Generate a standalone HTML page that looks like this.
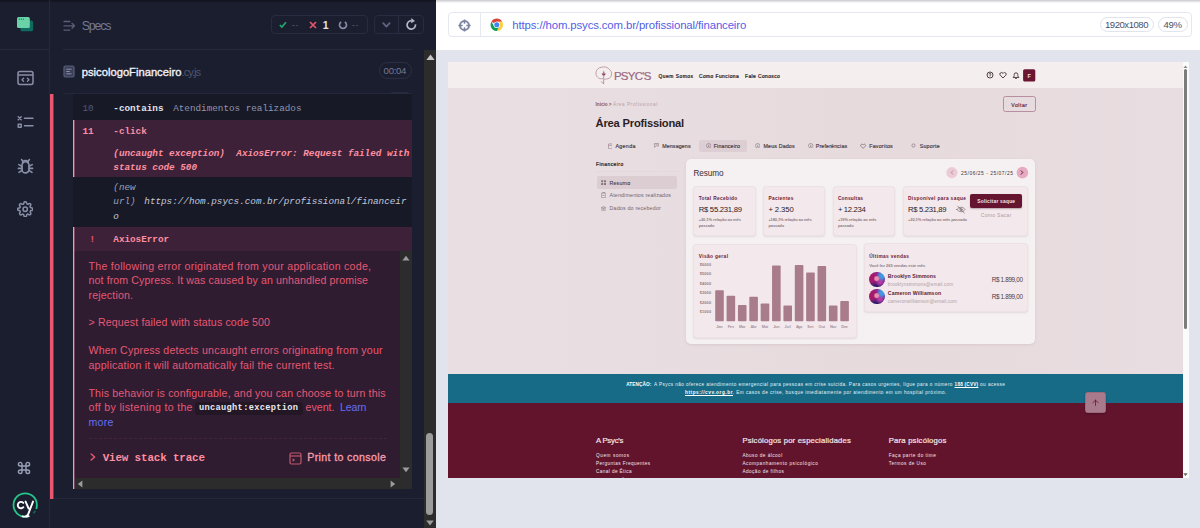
<!DOCTYPE html>
<html lang="en"><head><meta charset="utf-8"><title>Cypress - psicologoFinanceiro.cy.js</title>
<style>
html,body{margin:0;padding:0}
body{width:1200px;height:528px;position:relative;overflow:hidden;background:#e1e3ed;font-family:"Liberation Sans",sans-serif}
#app div,#app svg,#app span.t{position:absolute;display:block}
span.t{white-space:pre;line-height:1}
#app{position:absolute;left:0;top:0;width:1200px;height:528px;overflow:hidden}
</style></head><body><div id="app">
<div style="left:0px;top:0px;width:436px;height:528px;background:#1b1e2e;"></div>
<div style="left:0px;top:0px;width:436px;height:3px;background:linear-gradient(#10121c,rgba(16,18,28,0));"></div>
<div style="left:49px;top:0px;width:1px;height:528px;background:#252839;"></div>
<div style="left:0px;top:49px;width:49px;height:1px;background:#272a3d;"></div>
<div style="left:63px;top:49px;width:349px;height:1px;background:#272a3d;"></div>
<div style="left:63px;top:93px;width:349px;height:1px;background:#24273a;"></div>
<div style="left:50px;top:498px;width:386px;height:1px;background:#25283a;"></div>
<svg style="left:16px;top:16px" width="18" height="16" viewBox="0 0 18 16"><rect x="4.5" y="4.5" width="12.6" height="10.8" rx="1.6" fill="#0f6b62"/><rect x="1" y="1" width="12.8" height="11" rx="1.6" fill="#69d3a7"/><rect x="2.8" y="2.6" width="1.2" height="1.2" fill="#1b8a6b"/><rect x="4.8" y="2.6" width="1.2" height="1.2" fill="#1b8a6b"/><rect x="6.8" y="2.6" width="1.2" height="1.2" fill="#1b8a6b"/></svg>
<svg style="left:17px;top:70px" width="17" height="16" viewBox="0 0 17 16" fill="none" stroke="#8a8fa8" stroke-width="1.5" stroke-linecap="round" stroke-linejoin="round"><rect x="1" y="1.4" width="15" height="13" rx="1.8"/><path d="M1 5h15" stroke-linecap="butt"/><path d="M6.6 8.2 5 9.8l1.6 1.6M10.4 8.2 12 9.8l-1.6 1.6" stroke-width="1.3"/></svg>
<svg style="left:17px;top:114.700px" width="17" height="15" viewBox="0 0 17 15" fill="none" stroke="#8a8fa8" stroke-width="1.4" stroke-linecap="round"><path d="M1.2 1.8l3 3M4.2 1.8l-3 3"/><path d="M7.5 3.3H16M7.5 10.8H16"/><rect x="1.2" y="9.2" width="3" height="3" stroke-linejoin="round"/></svg>
<svg style="left:17px;top:158px" width="17" height="17" viewBox="0 0 17 17" fill="none" stroke="#8a8fa8" stroke-width="1.600" stroke-linecap="round" stroke-linejoin="round"><path d="M5 7.2a3.5 3.5 0 0 1 7 0v4.2a3.5 3.5 0 0 1-7 0z"/><path d="M5.6 5.4a2.9 2.9 0 0 1 5.8 0"/><path d="M5 8.2 1.8 6.6M5 10.4H1.4M5 12.4l-3 2M12 8.2l3.2-1.6M12 10.4h3.6M12 12.4l3 2M5.8 3.2 4.6 1.6M11.2 3.2l1.2-1.6"/></svg>
<svg style="left:16.700px;top:201px" width="16.400" height="16.400" viewBox="0 0 24 24" fill="none" stroke="#8a8fa8" stroke-width="2.200" stroke-linecap="round" stroke-linejoin="round"><circle cx="12" cy="12" r="3.2"/><path d="M19.4 15a1.65 1.65 0 0 0 .33 1.82l.06.06a2 2 0 1 1-2.83 2.83l-.06-.06a1.65 1.65 0 0 0-1.82-.33 1.65 1.65 0 0 0-1 1.51V21a2 2 0 1 1-4 0v-.09A1.65 1.65 0 0 0 9 19.4a1.65 1.65 0 0 0-1.82.33l-.06.06a2 2 0 1 1-2.83-2.83l.06-.06a1.65 1.65 0 0 0 .33-1.82 1.65 1.65 0 0 0-1.51-1H3a2 2 0 1 1 0-4h.09A1.65 1.65 0 0 0 4.6 9a1.65 1.65 0 0 0-.33-1.82l-.06-.06a2 2 0 1 1 2.83-2.83l.06.06a1.65 1.65 0 0 0 1.82.33H9a1.65 1.65 0 0 0 1-1.51V3a2 2 0 1 1 4 0v.09a1.65 1.65 0 0 0 1 1.51 1.65 1.65 0 0 0 1.820-.33l.06-.06a2 2 0 1 1 2.83 2.83l-.06.06a1.65 1.65 0 0 0-.33 1.82V9a1.65 1.65 0 0 0 1.51 1H21a2 2 0 1 1 0 4h-.09a1.65 1.65 0 0 0-1.51 1z"/></svg>
<svg style="left:17.300px;top:460.800px" width="14" height="14" viewBox="0 0 14 14" fill="none" stroke="#9aa0b8" stroke-width="1.4"><path d="M5 5h4v4H5zM5 5V3.2A1.8 1.8 0 1 0 3.200 5H5M9 5V3.200A1.8 1.8 0 1 1 10.8 5H9M5 9v1.8A1.8 1.8 0 1 1 3.200 9H5M9 9v1.800A1.8 1.8 0 1 0 10.800 9H9"/></svg>
<svg style="left:12px;top:492px" width="27" height="27" viewBox="0 0 27 27" fill="none" stroke-linecap="round" stroke-linejoin="round"><circle cx="13.200" cy="13" r="11.700" stroke="#27c58c" stroke-width="1.800"/><path d="M24.200 17A11.700 11.700 0 0 1 17.400 23.900" stroke="#1b1e2e" stroke-width="2.800" stroke-linecap="butt"/><path d="M23.300 18.900A11.700 11.700 0 0 1 21.500 21.300" stroke="#176b52" stroke-width="1.600" stroke-linecap="butt"/><path d="M16.600 24.200A11.700 11.700 0 0 1 10.500 24.400" stroke="#fff" stroke-width="1.800"/><path d="M11.300 10.900a3.200 3.200 0 1 0 .1 4.300" stroke="#fff" stroke-width="1.900"/><path d="M13.600 9.600l3 6.900M21 9.600l-4.600 12q-.6 1.800-2.200 2.600" stroke="#fff" stroke-width="1.900"/></svg>
<svg style="left:63px;top:20px" width="13" height="12" viewBox="0 0 13 12" fill="none" stroke="#5a5f7a" stroke-width="1.300" stroke-linecap="round" stroke-linejoin="round"><path d="M1 1.500h5.800M1 5.800h10.400M1 10.100h5.800M9 3.300l2.500 2.500L9 8.300"/></svg>
<span class="t" style="left:81.80px;top:19.60px;font:400 12.4px/1 'Liberation Sans',sans-serif;color:#747994;letter-spacing:-1.209px;">Specs</span>
<div style="left:271px;top:15px;width:97px;height:18.5px;background:transparent;border:1px solid #282c41;border-radius:4px;box-sizing:border-box"></div>
<svg style="left:279px;top:21.200px" width="8" height="7.500" viewBox="0 0 8 7.500" fill="none" stroke="#1fa971" stroke-width="1.700"><path d="M.8 4 2.900 6.100 7 1.200"/></svg>
<div style="left:292px;top:25px;width:2.5px;height:1px;background:#3d425c;"></div>
<div style="left:295.7px;top:25px;width:2.5px;height:1px;background:#3d425c;"></div>
<svg style="left:309px;top:20.5px" width="8" height="8" viewBox="0 0 8 8" fill="none" stroke="#e45770" stroke-width="1.700"><path d="M1 1l6 6M7 1 1 7"/></svg>
<span class="t" style="left:322.80px;top:19.71px;font:700 10.5px/1 'Liberation Sans',sans-serif;color:#e1e3ed;">1</span>
<svg style="left:337.600px;top:20.300px" width="10" height="10" viewBox="0 0 10 10" fill="none" stroke="#8589a4" stroke-width="1.700"><path d="M3.200 1.900A3.500 3.500 0 1 0 6.800 1.900"/></svg>
<div style="left:352px;top:25px;width:2.5px;height:1px;background:#3d425c;"></div>
<div style="left:355.7px;top:25px;width:2.5px;height:1px;background:#3d425c;"></div>
<div style="left:374px;top:15px;width:49.5px;height:18.5px;background:transparent;border:1px solid #282c41;border-radius:4px;box-sizing:border-box"></div>
<div style="left:398px;top:15.5px;width:1px;height:17.5px;background:#282c41;"></div>
<svg style="left:382.300px;top:21.500px" width="9" height="6.500" viewBox="0 0 9 6.500" fill="none" stroke="#5d6280" stroke-width="1.800" stroke-linecap="round" stroke-linejoin="round"><path d="M1.200 1.200l3.200 3.400L7.600 1.200"/></svg>
<svg style="left:404.500px;top:17.500px" width="13" height="13" viewBox="0 0 13 13" fill="none"><path d="M10.440 6.300A4.200 4.200 0 1 1 6.300 2.700" stroke="#b4b8cc" stroke-width="1.700"/><path d="M6.300 .1 10 2.900 6.100 5.300z" fill="#b4b8cc"/></svg>
<svg style="left:63px;top:65px" width="12" height="13" viewBox="0 0 12 13" fill="#3a3e56" stroke="#5a5f7a" stroke-width="1.200"><rect x="1" y="1" width="10" height="11" rx="1.400"/><path d="M3.200 4.200h5.400M3.200 6.500h3.600M3.200 8.800h5.400" stroke="#8a8fa8" stroke-width="1"/></svg>
<span class="t" style="left:81.80px;top:66.62px;font:400 11.2px/1 'Liberation Sans',sans-serif;color:#f0f1f8;letter-spacing:0.005px;-webkit-text-stroke:.35px">psicologoFinanceiro</span>
<span class="t" style="left:181.60px;top:66.62px;font:400 11.2px/1 'Liberation Sans',sans-serif;color:#50556f;letter-spacing:-1.011px;">.cy.js</span>
<div style="left:378.5px;top:62px;width:33.5px;height:16.5px;background:transparent;border:1px solid #2b2f45;border-radius:9px;box-sizing:border-box"></div>
<span class="t" style="left:383.60px;top:65.87px;font:400 9.6px/1 'Liberation Sans',sans-serif;color:#747994;letter-spacing:-0.304px;">00:04</span>
<div style="left:391px;top:92px;width:17px;height:3px;background:#262a3d;border-radius:0 0 4px 4px"></div>
<div style="left:50px;top:93.5px;width:3px;height:405px;background:#e8566f;"></div>
<div style="left:53px;top:93.5px;width:1px;height:405px;background:#7a3650;"></div>
<div style="left:73px;top:94px;width:338.5px;height:395px;background:#171926;"></div>
<span class="t" style="left:82.40px;top:104.47px;font:400 9.3px/1 'Liberation Mono',monospace;color:#535874;">10</span>
<span class="t" style="left:113.30px;top:104.47px;font:700 9.3px/1 'Liberation Mono',monospace;color:#e1e3ed;">-contains</span>
<span class="t" style="left:173.20px;top:104.47px;font:400 9.3px/1 'Liberation Mono',monospace;color:#9095ad;">Atendimentos realizados</span>
<div style="left:73px;top:120px;width:338.5px;height:57px;background:#3c2138;"></div>
<div style="left:73px;top:120px;width:1px;height:57px;background:#f59aaa;"></div>
<div style="left:74px;top:120px;width:1px;height:57px;background:#7e4a5e;"></div>
<span class="t" style="left:82.40px;top:126.67px;font:700 9.3px/1 'Liberation Mono',monospace;color:#ff8fa0;">11</span>
<span class="t" style="left:113.30px;top:126.67px;font:700 9.3px/1 'Liberation Mono',monospace;color:#ff8fa0;">-click</span>
<span class="t" style="left:113.30px;top:148.77px;font:italic 700 9.3px/1 'Liberation Mono',monospace;color:#ff8fa0;">(uncaught exception)</span>
<span class="t" style="left:236.30px;top:148.77px;font:italic 700 9.3px/1 'Liberation Mono',monospace;color:#ff8fa0;">AxiosError: Request failed with</span>
<span class="t" style="left:113.30px;top:162.87px;font:italic 700 9.3px/1 'Liberation Mono',monospace;color:#ff8fa0;">status code 500</span>
<span class="t" style="left:113.30px;top:182.97px;font:italic 400 9.3px/1 'Liberation Mono',monospace;color:#9ba1bd;">(new</span>
<span class="t" style="left:113.30px;top:197.37px;font:italic 400 9.3px/1 'Liberation Mono',monospace;color:#9ba1bd;">url)</span>
<span class="t" style="left:144.30px;top:197.37px;font:italic 400 9.3px/1 'Liberation Mono',monospace;color:#c4c8dc;">https://hom.psycs.com.br/profissional/financeir</span>
<span class="t" style="left:113.30px;top:211.57px;font:italic 400 9.3px/1 'Liberation Mono',monospace;color:#c4c8dc;">o</span>
<div style="left:73px;top:227px;width:338.5px;height:24px;background:#3c2138;"></div>
<div style="left:73px;top:227px;width:1px;height:262px;background:#f59aaa;"></div>
<div style="left:74px;top:227px;width:1px;height:24px;background:#7e4a5e;"></div>
<div style="left:74px;top:251px;width:1px;height:238px;background:#70445a;"></div>
<span class="t" style="left:89.50px;top:235.37px;font:700 9.3px/1 'Liberation Mono',monospace;color:#e45770;">!</span>
<span class="t" style="left:113.30px;top:235.37px;font:700 9.3px/1 'Liberation Mono',monospace;color:#ff8fa0;">AxiosError</span>
<div style="left:74.5px;top:251px;width:325.5px;height:226.5px;background:#2f1c31;"></div>
<span class="t" style="left:88.50px;top:261.23px;font:400 10.6px/1 'Liberation Sans',sans-serif;color:#e65873;letter-spacing:0.266px;">The following error originated from your application code,</span>
<span class="t" style="left:88.50px;top:275.43px;font:400 10.6px/1 'Liberation Sans',sans-serif;color:#e65873;letter-spacing:0.116px;">not from Cypress. It was caused by an unhandled promise</span>
<span class="t" style="left:88.50px;top:289.63px;font:400 10.6px/1 'Liberation Sans',sans-serif;color:#e65873;letter-spacing:0.167px;">rejection.</span>
<span class="t" style="left:88.50px;top:317.23px;font:400 10.6px/1 'Liberation Sans',sans-serif;color:#e65873;letter-spacing:0.142px;">&gt; Request failed with status code 500</span>
<span class="t" style="left:88.50px;top:345.43px;font:400 10.6px/1 'Liberation Sans',sans-serif;color:#e65873;letter-spacing:0.189px;">When Cypress detects uncaught errors originating from your</span>
<span class="t" style="left:88.50px;top:359.63px;font:400 10.6px/1 'Liberation Sans',sans-serif;color:#e65873;letter-spacing:0.212px;">application it will automatically fail the current test.</span>
<span class="t" style="left:88.50px;top:387.83px;font:400 10.6px/1 'Liberation Sans',sans-serif;color:#e65873;letter-spacing:0.148px;">This behavior is configurable, and you can choose to turn this</span>
<span class="t" style="left:88.50px;top:402.03px;font:400 10.6px/1 'Liberation Sans',sans-serif;color:#e65873;letter-spacing:0.319px;">off by listening to the</span>
<div style="left:195px;top:402px;width:107.5px;height:13px;background:#231726;border-radius:3px"></div>
<span class="t" style="left:199.00px;top:404.33px;font:700 8.7px/1 'Liberation Mono',monospace;color:#e8e9f2;letter-spacing:0.303px;">uncaught:exception</span>
<span class="t" style="left:305.50px;top:402.03px;font:400 10.6px/1 'Liberation Sans',sans-serif;color:#e65873;letter-spacing:0.028px;">event.</span>
<span class="t" style="left:340.00px;top:402.03px;font:400 10.6px/1 'Liberation Sans',sans-serif;color:#6470f3;letter-spacing:-0.152px;">Learn</span>
<span class="t" style="left:88.50px;top:417.23px;font:400 10.6px/1 'Liberation Sans',sans-serif;color:#6470f3;letter-spacing:0.286px;">more</span>
<div style="left:88.5px;top:437.5px;width:298px;height:0px;background:transparent;border-top:1px dashed #412539"></div>
<svg style="left:90px;top:453px" width="6" height="8" viewBox="0 0 6 8" fill="none" stroke="#e45770" stroke-width="1.500" stroke-linecap="round" stroke-linejoin="round"><path d="M1.200 1 4.600 4 1.200 7"/></svg>
<span class="t" style="left:102.70px;top:452.68px;font:700 10.85px/1 'Liberation Mono',monospace;color:#ff8fa0;letter-spacing:-0.122px;">View stack trace</span>
<svg style="left:289px;top:451.500px" width="13" height="13" viewBox="0 0 13 13" fill="none" stroke="#c4566e" stroke-width="1.200" stroke-linejoin="round"><rect x="1" y="1" width="11" height="11" rx="1.500"/><path d="M1 4h11"/><path d="M3.600 6.200v3.600l2.600-1.800z" fill="#c4566e" stroke="none"/></svg>
<span class="t" style="left:307.30px;top:452.23px;font:400 10.6px/1 'Liberation Sans',sans-serif;color:#fb9cab;letter-spacing:0.365px;-webkit-text-stroke:.3px">Print to console</span>
<div style="left:400px;top:251px;width:11.5px;height:226.5px;background:#2c2c2c;"></div>
<div style="left:74.5px;top:477.5px;width:337px;height:11.5px;background:#2c2c2c;"></div>
<svg style="left:402px;top:255px" width="8" height="6" viewBox="0 0 8 6"><path d="M4 .8 7.600 5.400H.4z" fill="#9c9c9c"/></svg>
<svg style="left:402px;top:467px" width="8" height="6" viewBox="0 0 8 6"><path d="M4 5.200 7.600 .6H.4z" fill="#9c9c9c"/></svg>
<svg style="left:77px;top:479.500px" width="6" height="8" viewBox="0 0 6 8"><path d="M.8 4 5.400 .4v7.200z" fill="#9c9c9c"/></svg>
<svg style="left:390px;top:479.500px" width="6" height="8" viewBox="0 0 6 8"><path d="M5.200 4 .6 .4v7.200z" fill="#9c9c9c"/></svg>
<div style="left:424px;top:50px;width:12px;height:478px;background:#2c2c2c;"></div>
<svg style="left:425.500px;top:53.500px" width="9" height="6.500" viewBox="0 0 8 6"><path d="M4 .4 7.900 5.700H.1z" fill="#c4c4c4"/></svg>
<svg style="left:426px;top:519.500px" width="8" height="6" viewBox="0 0 8 6"><path d="M4 5.400 7.800 .4H.2z" fill="#9c9c9c"/></svg>
<div style="left:426px;top:432.5px;width:7px;height:82px;background:#9c9c9c;border-radius:3.500px"></div>
<div style="left:436px;top:0px;width:764px;height:50px;background:#ffffff;"></div>
<div style="left:436px;top:0px;width:764px;height:3px;background:linear-gradient(#c9c9cf,rgba(255,255,255,0));"></div>
<div style="left:436px;top:50px;width:764px;height:478px;background:#e1e3ed;"></div>
<div style="left:448px;top:12px;width:744px;height:24.5px;background:#fff;border:1px solid #e6e8f1;border-radius:4px;box-sizing:border-box"></div>
<div style="left:480px;top:12.5px;width:1px;height:23.5px;background:#e6e8f1;"></div>
<svg style="left:458.300px;top:18.500px" width="13" height="13" viewBox="0 0 13 13" fill="none" stroke="#7d84a0"><circle cx="6.500" cy="6.500" r="4.500" stroke-width="1.900"/><path d="M6.500 .4v4.300M6.500 8.300v4.300M.4 6.500h4.300M8.300 6.500h4.300" stroke-width="1.500"/></svg>
<svg style="left:490px;top:17.500px" width="13.600" height="13.600" viewBox="0 0 48 48"><circle cx="24" cy="24" r="22" fill="#fff"/><path d="M24 2a22 22 0 0 1 19.050 11H24a11 11 0 0 0-9.530 5.500L5 13A22 22 0 0 1 24 2z" fill="#db4437"/><path d="M43.050 13A22 22 0 0 1 24 46l9.530-16.500A11 11 0 0 0 33.530 18.500z" fill="#ffcd40"/><path d="M24 46A22 22 0 0 1 4.950 13l9.520 16.500A11 11 0 0 0 24 35l9.530-5.500z" fill="#0f9d58"/><path d="M43.050 13H24a11 11 0 0 1 9.530 5.500z" fill="#ffcd40"/><circle cx="24" cy="24" r="11.200" fill="#fff"/><circle cx="24" cy="24" r="9" fill="#4285f4"/></svg>
<span class="t" style="left:512.30px;top:19.55px;font:400 11.4px/1 'Liberation Sans',sans-serif;color:#5360e5;letter-spacing:-0.127px;">https://hom.psycs.com.br/profissional/financeiro</span>
<div style="left:1099.5px;top:17.2px;width:54.5px;height:15.3px;background:#fff;border:1px solid #e1e3ed;border-radius:8px;box-sizing:border-box"></div>
<span class="t" style="left:1105.00px;top:20.47px;font:400 9.6px/1 'Liberation Sans',sans-serif;color:#4b506b;letter-spacing:-0.498px;">1920x1080</span>
<div style="left:1158px;top:17.2px;width:29.5px;height:15.3px;background:#fff;border:1px solid #e1e3ed;border-radius:8px;box-sizing:border-box"></div>
<span class="t" style="left:1163.50px;top:20.47px;font:400 9.6px/1 'Liberation Sans',sans-serif;color:#4b506b;letter-spacing:-0.352px;">49%</span>
<div id="aut" style="left:448.4px;top:62px;width:740.6px;height:416px;background:#e8dde0;overflow:hidden">
<div style="left:-0.4px;top:26px;width:735px;height:286px;background:linear-gradient(90deg,#e9dfe2,#e6dadd 60%,#e8dde0);"></div>
<div style="left:-0.4px;top:0px;width:735px;height:26.3px;background:#f4eeef;"></div>
<svg style="left:147.10px;top:4.00px" width="17.5" height="19" viewBox="0 0 17.5 19" ><g fill="none" stroke="#b08797" stroke-width=".75" stroke-linecap="round" stroke-linejoin="round"><path d="M9.600 13.200c3.400 .2 6.400-1.300 6.900-4.200 .5-2.700-.6-4.600-2.300-5.600C12.800 1 9.400 .4 6.800 1.200 3.900 1.400 1.400 3.400 1 6.200c-.4 2.600 .8 4.400 1.600 5 1 1.300 3.200 2 5.200 1.400"/><path d="M8.700 5.200V17.600M6.400 15.600l2.100 2.200" stroke="#a9798c"/></g><path d="M6.500 7.600h4.400l-1.300 1.900H7.800z" fill="#8e4563"/><circle cx="8.700" cy="7" r=".9" fill="#a9798c"/></svg>
<span class="t" style="left:165.50px;top:8.87px;font:400 11.5px/1 'Liberation Sans',sans-serif;color:#9a6a81;letter-spacing:-0.717px;-webkit-text-stroke:.22px #9a6a81">PSYC&#x27;S</span>
<span class="t" style="left:210.10px;top:13.05px;font:400 4.9px/1 'Liberation Sans',sans-serif;color:#2a1a20;letter-spacing:0.510px;-webkit-text-stroke:.22px">Quem Somos</span>
<span class="t" style="left:250.60px;top:13.05px;font:400 4.9px/1 'Liberation Sans',sans-serif;color:#2a1a20;letter-spacing:0.431px;-webkit-text-stroke:.22px">Como Funciona</span>
<span class="t" style="left:296.60px;top:13.05px;font:400 4.9px/1 'Liberation Sans',sans-serif;color:#2a1a20;letter-spacing:0.419px;-webkit-text-stroke:.22px">Fale Conosco</span>
<svg style="left:537.60px;top:8.80px" width="8" height="8" viewBox="0 0 8 8" ><g fill="none" stroke="#2a1a20" stroke-width=".8"><circle cx="4" cy="4" r="3"/><path d="M3.100 3.300a.9 .9 0 1 1 1.300 .8c-.3 .2-.4 .4-.4 .8M4 5.700v.3"/></g></svg>
<svg style="left:550.60px;top:8.80px" width="8" height="8" viewBox="0 0 8 8" ><path d="M4 7 1.300 4.300a1.600 1.600 0 1 1 2.300-2.300L4 2.400l.4-.4a1.600 1.600 0 1 1 2.300 2.300z" fill="none" stroke="#2a1a20" stroke-width=".8" stroke-linejoin="round"/></svg>
<svg style="left:563.30px;top:8.60px" width="8" height="8.5" viewBox="0 0 8 8.500" ><path d="M1.400 6.200c.7-.6 .8-1.300 .8-2.600a1.800 1.800 0 0 1 3.600 0c0 1.300 .1 2 .8 2.600zM3.300 7.300a.8 .8 0 0 0 1.400 0" fill="none" stroke="#2a1a20" stroke-width=".8" stroke-linejoin="round" stroke-linecap="round"/></svg>
<svg style="left:573.60px;top:6.00px" width="15" height="15" viewBox="0 0 15 15" ><rect x="1.100" y="1.200" width="12.200" height="12.400" rx="1.600" fill="#6a1532"/></svg>
<span class="t" style="left:579.20px;top:12.36px;font:700 5.6px/1 'Liberation Sans',sans-serif;color:#f0dfe4;">F</span>
<span class="t" style="left:147.20px;top:40.52px;font:700 4.7px/1 'Liberation Sans',sans-serif;color:#8b5468;letter-spacing:-0.040px;">Início &gt;</span>
<span class="t" style="left:164.60px;top:40.52px;font:400 4.7px/1 'Liberation Sans',sans-serif;color:#b9a0aa;letter-spacing:0.548px;">Área Profissional</span>
<div style="left:554.8px;top:34.3px;width:32.8px;height:15.4px;background:transparent;border:1px solid #b68fa1;border-radius:2.500px;box-sizing:border-box"></div>
<span class="t" style="left:562.90px;top:41.28px;font:400 5.1px/1 'Liberation Sans',sans-serif;color:#6f2a47;letter-spacing:0.534px;-webkit-text-stroke:.2px">Voltar</span>
<span class="t" style="left:147.20px;top:56.22px;font:700 11.2px/1 'Liberation Sans',sans-serif;color:#2b1d23;letter-spacing:-0.214px;">Área Profissional</span>
<div style="left:250.6px;top:78px;width:48px;height:11.5px;background:#ddced3;border-radius:2px"></div>
<svg style="left:159.30px;top:80.70px" width="4.8" height="6.2" viewBox="0 0 4.800 6.200" ><rect x=".4" y=".9" width="4" height="4.900" rx=".7" fill="none" stroke="#8a7780" stroke-width=".6"/><path d="M.4 2.400h4" stroke="#8a7780" stroke-width=".5"/></svg>
<span class="t" style="left:167.00px;top:81.71px;font:400 5.3px/1 'Liberation Sans',sans-serif;color:#45353d;letter-spacing:0.347px;-webkit-text-stroke:.15px">Agenda</span>
<svg style="left:206.10px;top:81.30px" width="5" height="4.6" viewBox="0 0 5 4.600" ><path d="M.4 .4h4.200v2.600H2.200L.4 4.300z" fill="none" stroke="#8a7780" stroke-width=".6" stroke-linejoin="round"/><path d="M1.300 1.300h2.400" stroke="#8a7780" stroke-width=".5"/></svg>
<span class="t" style="left:213.80px;top:81.71px;font:400 5.3px/1 'Liberation Sans',sans-serif;color:#45353d;letter-spacing:0.126px;-webkit-text-stroke:.15px">Mensagens</span>
<svg style="left:257.70px;top:80.90px" width="5.4" height="5.4" viewBox="0 0 5.400 5.400" ><circle cx="2.700" cy="2.700" r="2.250" fill="none" stroke="#84717a" stroke-width=".55"/><path d="M2.700 1.500v2.400M2 3.300h1.400" stroke="#84717a" stroke-width=".5"/></svg>
<span class="t" style="left:265.30px;top:81.71px;font:400 5.3px/1 'Liberation Sans',sans-serif;color:#45353d;letter-spacing:0.163px;-webkit-text-stroke:.15px">Financeiro</span>
<svg style="left:306.70px;top:80.90px" width="5.4" height="5.4" viewBox="0 0 5.400 5.400" ><circle cx="2.700" cy="2.700" r="2.250" fill="none" stroke="#84717a" stroke-width=".55"/><path d="M2.700 1.500v2.400M2 3.300h1.400" stroke="#84717a" stroke-width=".5"/></svg>
<span class="t" style="left:315.10px;top:81.71px;font:400 5.3px/1 'Liberation Sans',sans-serif;color:#45353d;letter-spacing:0.150px;-webkit-text-stroke:.15px">Meus Dados</span>
<svg style="left:359.90px;top:80.90px" width="5.4" height="5.4" viewBox="0 0 5.400 5.400" ><circle cx="2.700" cy="2.700" r="2.250" fill="none" stroke="#84717a" stroke-width=".55"/><path d="M2.700 1.500v2.400M2 3.300h1.400" stroke="#84717a" stroke-width=".5"/></svg>
<span class="t" style="left:367.30px;top:81.71px;font:400 5.3px/1 'Liberation Sans',sans-serif;color:#45353d;letter-spacing:0.159px;-webkit-text-stroke:.15px">Preferências</span>
<svg style="left:412.10px;top:80.80px" width="6.2" height="6.2" viewBox="0 0 8 8" ><path d="M4 7 1.300 4.300a1.600 1.600 0 1 1 2.300-2.300L4 2.400l.4-.4a1.600 1.600 0 1 1 2.300 2.300z" fill="none" stroke="#7a6670" stroke-width=".9"/></svg>
<span class="t" style="left:420.80px;top:81.71px;font:400 5.3px/1 'Liberation Sans',sans-serif;color:#45353d;letter-spacing:0.225px;-webkit-text-stroke:.15px">Favoritos</span>
<svg style="left:462.90px;top:81.00px" width="5" height="5.5" viewBox="0 0 5 5.500" ><circle cx="2.500" cy="2.500" r="1.600" fill="none" stroke="#7b6670" stroke-width=".6"/></svg>
<span class="t" style="left:471.30px;top:81.71px;font:400 5.3px/1 'Liberation Sans',sans-serif;color:#45353d;letter-spacing:0.223px;-webkit-text-stroke:.15px">Suporte</span>
<span class="t" style="left:147.60px;top:100.85px;font:400 4.9px/1 'Liberation Sans',sans-serif;color:#2c1e24;letter-spacing:0.484px;-webkit-text-stroke:.22px">Financeiro</span>
<div style="left:147.2px;top:109px;width:83px;height:0.6px;background:#e3d8dc;"></div>
<div style="left:148.3px;top:114.2px;width:80.8px;height:12.8px;background:#dccdd3;border-radius:2px"></div>
<svg style="left:152.60px;top:117.90px" width="5.2" height="5.2" viewBox="0 0 5.200 5.200" ><g fill="#85737c"><rect x=".2" y=".2" width="2" height="2" rx=".3"/><rect x="3" y=".2" width="2" height="2" rx=".3"/><rect x=".2" y="3" width="2" height="2" rx=".3"/><rect x="3" y="3" width="2" height="2" rx=".3"/></g></svg>
<span class="t" style="left:161.10px;top:119.41px;font:400 5.3px/1 'Liberation Sans',sans-serif;color:#45353d;letter-spacing:0.173px;-webkit-text-stroke:.08px">Resumo</span>
<svg style="left:152.60px;top:130.30px" width="5.2" height="6" viewBox="0 0 5.200 6" ><g fill="none" stroke="#8a7780" stroke-width=".55"><rect x=".4" y="1" width="4.400" height="4.600" rx=".5"/><path d="M1.700 1V.4h1.800V1M1.600 3.400h2" stroke-linecap="round"/></g></svg>
<span class="t" style="left:161.10px;top:131.21px;font:400 5.3px/1 'Liberation Sans',sans-serif;color:#75626b;letter-spacing:0.158px;">Atendimentos realizados</span>
<svg style="left:152.60px;top:143.60px" width="5.2" height="5.4" viewBox="0 0 5.200 5.400" ><g fill="none" stroke="#8a7780" stroke-width=".55" stroke-linecap="round"><path d="M.4 1.700 2.600 .4 4.800 1.700z" stroke-linejoin="round"/><path d="M1.100 2.400v1.700M2.600 2.400v1.700M4.100 2.400v1.700M.3 5h4.600"/></g></svg>
<span class="t" style="left:161.10px;top:144.21px;font:400 5.3px/1 'Liberation Sans',sans-serif;color:#75626b;letter-spacing:0.194px;">Dados do recebedor</span>
<div style="left:237.8px;top:97.4px;width:348.8px;height:184.8px;background:#f5f0f1;border-radius:5px;box-shadow:0 1px 3px rgba(120,80,95,.12)"></div>
<span class="t" style="left:245.10px;top:107.66px;font:400 8.2px/1 'Liberation Sans',sans-serif;color:#3a2d33;letter-spacing:-0.080px;">Resumo</span>
<svg style="left:496.60px;top:104.00px" width="13" height="13" viewBox="0 0 13 13" ><circle cx="6.900" cy="6.600" r="5.600" fill="#eccbd6"/></svg>
<svg style="left:566.60px;top:104.00px" width="14" height="13" viewBox="0 0 14 13" ><circle cx="7.400" cy="6.600" r="5.800" fill="#e6abc2"/></svg>
<svg style="left:501.50px;top:108.10px" width="4" height="5" viewBox="0 0 4 5" ><path d="M2.800 .8 1.200 2.500 2.800 4.200" fill="none" stroke="#a8788a" stroke-width=".8" stroke-linecap="round" stroke-linejoin="round"/></svg>
<svg style="left:572.10px;top:108.10px" width="4" height="5" viewBox="0 0 4 5" ><path d="M1.200 .8 2.800 2.500 1.200 4.200" fill="none" stroke="#4f1830" stroke-width="1" stroke-linecap="round" stroke-linejoin="round"/></svg>
<span class="t" style="left:512.60px;top:109.85px;font:400 4.9px/1 'Liberation Sans',sans-serif;color:#3f3037;letter-spacing:0.532px;">25/06/25 - 25/07/25</span>
<div style="left:245.1px;top:123.7px;width:62.3px;height:50.5px;background:#f3e9ec;border:1px solid #ece2e5;border-radius:3.500px;box-sizing:border-box;box-shadow:0 1px 2px rgba(110,70,85,.13)"></div>
<span class="t" style="left:250.30px;top:135.14px;font:700 4.8px/1 'Liberation Sans',sans-serif;color:#6a1a36;letter-spacing:0.351px;">Total Recebido</span>
<span class="t" style="left:250.30px;top:144.28px;font:400 7.7px/1 'Liberation Sans',sans-serif;color:#2c2025;letter-spacing:-0.261px;">R$ 55.231,89</span>
<span class="t" style="left:250.30px;top:155.81px;font:700 4px/1 'Liberation Sans',sans-serif;color:#8d7b84;letter-spacing:-0.070px;">+20,1% relação ao mês</span>
<span class="t" style="left:250.30px;top:162.01px;font:700 4px/1 'Liberation Sans',sans-serif;color:#8d7b84;letter-spacing:-0.089px;">passado</span>
<div style="left:314.8px;top:123.7px;width:62.1px;height:50.5px;background:#f3e9ec;border:1px solid #ece2e5;border-radius:3.500px;box-sizing:border-box;box-shadow:0 1px 2px rgba(110,70,85,.13)"></div>
<span class="t" style="left:320.00px;top:135.14px;font:700 4.8px/1 'Liberation Sans',sans-serif;color:#6a1a36;letter-spacing:0.337px;">Pacientes</span>
<span class="t" style="left:320.00px;top:144.28px;font:400 7.7px/1 'Liberation Sans',sans-serif;color:#2c2025;letter-spacing:-0.096px;">+ 2.350</span>
<span class="t" style="left:320.00px;top:155.81px;font:700 4px/1 'Liberation Sans',sans-serif;color:#8d7b84;letter-spacing:-0.125px;">+180,1% relação ao mês</span>
<span class="t" style="left:320.00px;top:162.01px;font:700 4px/1 'Liberation Sans',sans-serif;color:#8d7b84;letter-spacing:-0.089px;">passado</span>
<div style="left:384.3px;top:123.7px;width:62.1px;height:50.5px;background:#f3e9ec;border:1px solid #ece2e5;border-radius:3.500px;box-sizing:border-box;box-shadow:0 1px 2px rgba(110,70,85,.13)"></div>
<span class="t" style="left:389.50px;top:135.14px;font:700 4.8px/1 'Liberation Sans',sans-serif;color:#6a1a36;letter-spacing:0.237px;">Consultas</span>
<span class="t" style="left:389.50px;top:144.28px;font:400 7.7px/1 'Liberation Sans',sans-serif;color:#2c2025;letter-spacing:-0.334px;">+ 12.234</span>
<span class="t" style="left:389.50px;top:155.81px;font:700 4px/1 'Liberation Sans',sans-serif;color:#8d7b84;letter-spacing:-0.098px;">+19% relação ao mês</span>
<span class="t" style="left:389.50px;top:162.01px;font:700 4px/1 'Liberation Sans',sans-serif;color:#8d7b84;letter-spacing:-0.089px;">passado</span>
<div style="left:454.4px;top:123.7px;width:125.2px;height:50.5px;background:#f3e9ec;border:1px solid #ece2e5;border-radius:3.500px;box-sizing:border-box;box-shadow:0 1px 2px rgba(110,70,85,.13)"></div>
<span class="t" style="left:459.60px;top:135.14px;font:700 4.8px/1 'Liberation Sans',sans-serif;color:#6a1a36;letter-spacing:0.349px;">Disponível para saque</span>
<span class="t" style="left:459.60px;top:144.28px;font:400 7.7px/1 'Liberation Sans',sans-serif;color:#2c2025;letter-spacing:-0.329px;">R$ 5.231,89</span>
<span class="t" style="left:459.60px;top:155.81px;font:700 4px/1 'Liberation Sans',sans-serif;color:#8d7b84;letter-spacing:-0.070px;">+20,1% relação ao mês passado</span>
<svg style="left:507.70px;top:142.60px" width="10" height="9" viewBox="0 0 9 8" ><g fill="none" stroke="#66565e" stroke-width=".55" stroke-linecap="round"><path d="M.8 4c1.900-2.700 5.500-2.700 7.400 0-1.900 2.700-5.500 2.700-7.400 0z"/><circle cx="4.500" cy="4" r="1"/><path d="M1.500 .9l6 6.400"/></g></svg>
<div style="left:521.5px;top:132.3px;width:52.6px;height:13.8px;background:#651530;border-radius:2px;box-shadow:0 1px 1.500px rgba(60,10,30,.3)"></div>
<span class="t" style="left:528.90px;top:138.45px;font:700 4.9px/1 'Liberation Sans',sans-serif;color:#f6e6eb;letter-spacing:0.215px;">Solicitar saque</span>
<span class="t" style="left:532.30px;top:151.08px;font:400 5.1px/1 'Liberation Sans',sans-serif;color:#b09aa4;letter-spacing:0.265px;">Como Sacar</span>
<div style="left:245.1px;top:181.5px;width:163.7px;height:94px;background:#f3e9ec;border:1px solid #ece2e5;border-radius:3.500px;box-sizing:border-box;box-shadow:0 1px 2px rgba(110,70,85,.13)"></div>
<span class="t" style="left:250.30px;top:192.94px;font:700 4.8px/1 'Liberation Sans',sans-serif;color:#6a1a36;letter-spacing:0.378px;">Visão geral</span>
<span class="t" style="left:251.30px;top:200.90px;font:700 3.9px/1 'Liberation Sans',sans-serif;color:#8d7b84;letter-spacing:0.143px;">$6000</span>
<span class="t" style="left:251.30px;top:209.80px;font:700 3.9px/1 'Liberation Sans',sans-serif;color:#8d7b84;letter-spacing:0.143px;">$5000</span>
<span class="t" style="left:251.30px;top:219.60px;font:700 3.9px/1 'Liberation Sans',sans-serif;color:#8d7b84;letter-spacing:0.143px;">$4000</span>
<span class="t" style="left:251.30px;top:229.20px;font:700 3.9px/1 'Liberation Sans',sans-serif;color:#8d7b84;letter-spacing:0.143px;">$3000</span>
<span class="t" style="left:251.30px;top:239.10px;font:700 3.9px/1 'Liberation Sans',sans-serif;color:#8d7b84;letter-spacing:0.143px;">$2000</span>
<span class="t" style="left:251.30px;top:248.40px;font:700 3.9px/1 'Liberation Sans',sans-serif;color:#8d7b84;letter-spacing:0.143px;">$1000</span>
<span class="t" style="left:267.90px;top:262.90px;font:700 3.9px/1 'Liberation Sans',sans-serif;color:#a3929a;letter-spacing:-0.159px;">Jan</span>
<span class="t" style="left:279.27px;top:262.90px;font:700 3.9px/1 'Liberation Sans',sans-serif;color:#a3929a;letter-spacing:-0.159px;">Fev</span>
<span class="t" style="left:290.64px;top:262.90px;font:700 3.9px/1 'Liberation Sans',sans-serif;color:#a3929a;letter-spacing:-0.261px;">Mar</span>
<span class="t" style="left:302.01px;top:262.90px;font:700 3.9px/1 'Liberation Sans',sans-serif;color:#a3929a;letter-spacing:-0.152px;">Abr</span>
<span class="t" style="left:313.38px;top:262.90px;font:700 3.9px/1 'Liberation Sans',sans-serif;color:#a3929a;letter-spacing:-0.050px;">Mai</span>
<span class="t" style="left:324.75px;top:262.90px;font:700 3.9px/1 'Liberation Sans',sans-serif;color:#a3929a;letter-spacing:-0.261px;">Jun</span>
<span class="t" style="left:336.12px;top:262.90px;font:700 3.9px/1 'Liberation Sans',sans-serif;color:#a3929a;letter-spacing:0.388px;">Jul</span>
<span class="t" style="left:347.49px;top:262.90px;font:700 3.9px/1 'Liberation Sans',sans-serif;color:#a3929a;letter-spacing:-0.589px;">Ago</span>
<span class="t" style="left:358.86px;top:262.90px;font:700 3.9px/1 'Liberation Sans',sans-serif;color:#a3929a;letter-spacing:0.169px;">Set</span>
<span class="t" style="left:370.23px;top:262.90px;font:700 3.9px/1 'Liberation Sans',sans-serif;color:#a3929a;letter-spacing:-0.152px;">Out</span>
<span class="t" style="left:381.60px;top:262.90px;font:700 3.9px/1 'Liberation Sans',sans-serif;color:#a3929a;letter-spacing:-0.480px;">Nov</span>
<span class="t" style="left:392.97px;top:262.90px;font:700 3.9px/1 'Liberation Sans',sans-serif;color:#a3929a;letter-spacing:-0.261px;">Dez</span>
<svg style="left:261.60px;top:198.00px" width="145" height="65" viewBox="0 0 145 65" ><g fill="#a97c8c"><rect x="5.20" y="30.30" width="8.600" height="30.90" rx=".8"/><rect x="16.57" y="35.70" width="8.600" height="25.50" rx=".8"/><rect x="27.94" y="45.10" width="8.600" height="16.10" rx=".8"/><rect x="39.31" y="36.70" width="8.600" height="24.50" rx=".8"/><rect x="50.68" y="43.40" width="8.600" height="17.80" rx=".8"/><rect x="62.05" y="5.40" width="8.600" height="55.80" rx=".8"/><rect x="73.42" y="45.60" width="8.600" height="15.60" rx=".8"/><rect x="84.79" y="5.00" width="8.600" height="56.20" rx=".8"/><rect x="96.16" y="12.60" width="8.600" height="48.60" rx=".8"/><rect x="107.53" y="5.90" width="8.600" height="55.30" rx=".8"/><rect x="118.90" y="45.60" width="8.600" height="15.60" rx=".8"/><rect x="130.27" y="41.10" width="8.600" height="20.10" rx=".8"/></g></svg>
<div style="left:415.9px;top:180.8px;width:163.4px;height:69.4px;background:#f3e9ec;border:1px solid #ece2e5;border-radius:3.500px;box-sizing:border-box;box-shadow:0 1px 2px rgba(110,70,85,.13)"></div>
<span class="t" style="left:420.90px;top:192.94px;font:700 4.8px/1 'Liberation Sans',sans-serif;color:#6a1a36;letter-spacing:0.346px;">Últimas vendas</span>
<span class="t" style="left:420.90px;top:202.01px;font:700 4px/1 'Liberation Sans',sans-serif;color:#8d7b84;letter-spacing:-0.032px;">Você fez 265 vendas este mês</span>
<div style="left:420.8px;top:209.9px;width:15.5px;height:15.5px;background:radial-gradient(circle at 48% 44%,#ea8db3 0 15%,rgba(234,141,179,0) 27%),radial-gradient(circle at 80% 26%,#4596de 0 13%,rgba(69,150,222,0) 33%),radial-gradient(circle at 16% 38%,#a51a6a 0 24%,rgba(165,26,106,0) 50%),radial-gradient(circle at 70% 66%,#b43aa6 0 12%,rgba(180,58,166,0) 34%),linear-gradient(180deg,#8b2c9c 0%,#6a2a98 50%,#2a1760 100%);border-radius:50%"></div>
<span class="t" style="left:439.40px;top:211.70px;font:700 5.2px/1 'Liberation Sans',sans-serif;color:#5c1a33;letter-spacing:0.061px;">Brooklyn Simmons</span>
<span class="t" style="left:439.40px;top:221.11px;font:400 4.6px/1 'Liberation Sans',sans-serif;color:#b0a0a7;letter-spacing:0.161px;">brooklynsimmons@email.com</span>
<span class="t" style="left:543.30px;top:214.58px;font:400 6.4px/1 'Liberation Sans',sans-serif;color:#4c3d44;letter-spacing:-0.353px;">R$ 1.899,00</span>
<div style="left:420.8px;top:226.9px;width:15.5px;height:15.5px;background:radial-gradient(circle at 48% 44%,#ea8db3 0 15%,rgba(234,141,179,0) 27%),radial-gradient(circle at 80% 26%,#4596de 0 13%,rgba(69,150,222,0) 33%),radial-gradient(circle at 16% 38%,#a51a6a 0 24%,rgba(165,26,106,0) 50%),radial-gradient(circle at 70% 66%,#b43aa6 0 12%,rgba(180,58,166,0) 34%),linear-gradient(180deg,#8b2c9c 0%,#6a2a98 50%,#2a1760 100%);border-radius:50%"></div>
<span class="t" style="left:439.40px;top:228.70px;font:700 5.2px/1 'Liberation Sans',sans-serif;color:#5c1a33;letter-spacing:0.120px;">Cameron Williamson</span>
<span class="t" style="left:439.40px;top:238.11px;font:400 4.6px/1 'Liberation Sans',sans-serif;color:#b0a0a7;letter-spacing:0.167px;">cameronwilliamson@email.com</span>
<span class="t" style="left:543.30px;top:231.58px;font:400 6.4px/1 'Liberation Sans',sans-serif;color:#4c3d44;letter-spacing:-0.353px;">R$ 1.899,00</span>
<div style="left:-0.4px;top:311.7px;width:735px;height:29.2px;background:#176b87;"></div>
<span class="t" style="left:177.80px;top:321.22px;font:700 4.7px/1 'Liberation Sans',sans-serif;color:#ffffff;letter-spacing:0.116px;">ATENÇÃO:</span>
<span class="t" style="left:205.50px;top:321.22px;font:400 4.7px/1 'Liberation Sans',sans-serif;color:#e9f3f6;letter-spacing:0.418px;">A Psycs não oferece atendimento emergencial para pessoas em crise suicida. Para casos urgentes, ligue para o número</span>
<span class="t" style="left:506.20px;top:321.22px;font:700 4.7px/1 'Liberation Sans',sans-serif;color:#ffffff;letter-spacing:0.214px;text-decoration:underline">188 (CVV)</span>
<span class="t" style="left:531.70px;top:321.22px;font:400 4.7px/1 'Liberation Sans',sans-serif;color:#e9f3f6;letter-spacing:0.428px;">ou acesse</span>
<span class="t" style="left:236.60px;top:329.32px;font:700 4.7px/1 'Liberation Sans',sans-serif;color:#ffffff;letter-spacing:0.562px;text-decoration:underline">https://cvv.org.br</span>
<span class="t" style="left:284.40px;top:329.32px;font:400 4.7px/1 'Liberation Sans',sans-serif;color:#e9f3f6;letter-spacing:0.439px;">. Em casos de crise, busque imediatamente por atendimento em um hospital próximo.</span>
<div style="left:-0.4px;top:340.9px;width:735px;height:75.1px;background:#63142d;"></div>
<span class="t" style="left:147.60px;top:374.78px;font:400 7.7px/1 'Liberation Sans',sans-serif;color:#f4e6ea;letter-spacing:-0.202px;-webkit-text-stroke:.2px">A Psyc&#x27;s</span>
<span class="t" style="left:294.00px;top:374.78px;font:400 7.7px/1 'Liberation Sans',sans-serif;color:#f4e6ea;letter-spacing:0.181px;-webkit-text-stroke:.2px">Psicólogos por especialidades</span>
<span class="t" style="left:440.30px;top:374.78px;font:400 7.7px/1 'Liberation Sans',sans-serif;color:#f4e6ea;letter-spacing:0.214px;-webkit-text-stroke:.2px">Para psicólogos</span>
<span class="t" style="left:147.60px;top:391.72px;font:400 4.7px/1 'Liberation Sans',sans-serif;color:#f4e6ea;letter-spacing:0.581px;">Quem somos</span>
<span class="t" style="left:147.60px;top:399.99px;font:400 4.7px/1 'Liberation Sans',sans-serif;color:#f4e6ea;letter-spacing:0.406px;">Perguntas Frequentes</span>
<span class="t" style="left:147.60px;top:408.26px;font:400 4.7px/1 'Liberation Sans',sans-serif;color:#f4e6ea;letter-spacing:0.392px;">Canal de Ética</span>
<span class="t" style="left:147.60px;top:416.53px;font:400 4.7px/1 'Liberation Sans',sans-serif;color:#f4e6ea;letter-spacing:0.250px;">Código de Ética do Psicólogo</span>
<span class="t" style="left:294.00px;top:391.72px;font:400 4.7px/1 'Liberation Sans',sans-serif;color:#f4e6ea;letter-spacing:0.460px;">Abuso de álcool</span>
<span class="t" style="left:294.00px;top:399.99px;font:400 4.7px/1 'Liberation Sans',sans-serif;color:#f4e6ea;letter-spacing:0.514px;">Acompanhamento psicológico</span>
<span class="t" style="left:294.00px;top:408.26px;font:400 4.7px/1 'Liberation Sans',sans-serif;color:#f4e6ea;letter-spacing:0.449px;">Adoção de filhos</span>
<span class="t" style="left:294.00px;top:416.53px;font:400 4.7px/1 'Liberation Sans',sans-serif;color:#f4e6ea;letter-spacing:0.374px;">Adolescência</span>
<span class="t" style="left:440.30px;top:391.72px;font:400 4.7px/1 'Liberation Sans',sans-serif;color:#f4e6ea;letter-spacing:0.471px;">Faça parte do time</span>
<span class="t" style="left:440.30px;top:399.99px;font:400 4.7px/1 'Liberation Sans',sans-serif;color:#f4e6ea;letter-spacing:0.472px;">Termos de Uso</span>
<div style="left:636.4px;top:329.8px;width:21px;height:21px;background:#a97a8c;border:1px solid #9b6a7e;border-radius:2.500px;box-sizing:border-box;box-shadow:0 1px 2px rgba(0,0,0,.25)"></div>
<svg style="left:643.40px;top:336.50px" width="7" height="7.5" viewBox="0 0 7 7.500" ><path d="M3.500 6.400V1.200M.9 3.700 3.500 1.100 6.100 3.700" fill="none" stroke="#651530" stroke-width=".8" stroke-linecap="round" stroke-linejoin="round"/></svg>
<div style="left:734.6px;top:0px;width:6px;height:416px;background:#fbfbfb;"></div>
<div style="left:735.9px;top:6.7px;width:3.2px;height:260px;background:#7c7c7c;border-radius:1.600px"></div>
<svg style="left:735.10px;top:2.50px" width="5" height="3.5" viewBox="0 0 5 3.500" ><path d="M2.500 .4 4.700 3.200H.3z" fill="#8a8a8a"/></svg>
<svg style="left:735.10px;top:410.50px" width="5" height="3.5" viewBox="0 0 5 3.500" ><path d="M2.500 3.100 4.700 .3H.3z" fill="#6a6a6a"/></svg>
</div>
</div></body></html>
